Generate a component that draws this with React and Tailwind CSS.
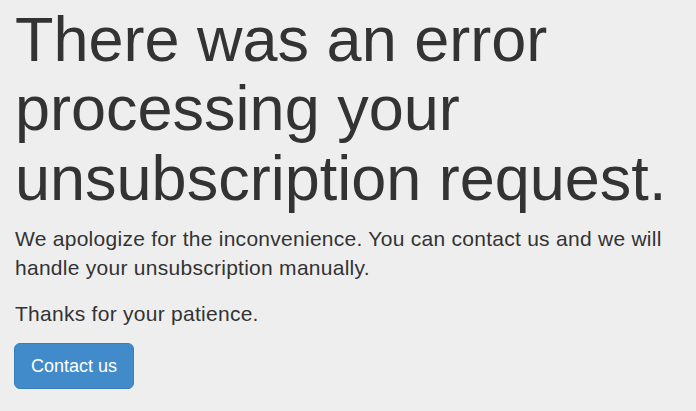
export default function App() {
    return (
        <div className="min-h-screen bg-[#eeeeee] px-[15px] pt-[5px] text-[#333333] font-['Liberation_Sans',Arial,sans-serif]">
            <h1 className="text-[63px] leading-[1.1] font-normal">
                There was an error processing your unsubscription request.
            </h1>
            <p className="mt-[11px] text-[21px] leading-[1.4] font-light tracking-[0.27px]">
                We apologize for the inconvenience. You can contact us and we
                will handle your unsubscription manually.
            </p>
            <p className="mt-[16px] text-[21px] leading-[1.4] font-light tracking-[0.27px]">
                Thanks for your patience.
            </p>
            <button className="mt-[15px] -ml-px px-4 py-[10px] text-[18px] leading-[24px] text-white bg-[#428bca] border border-[#357ebd] rounded-[6px]">
                Contact us
            </button>
        </div>
    );
}
